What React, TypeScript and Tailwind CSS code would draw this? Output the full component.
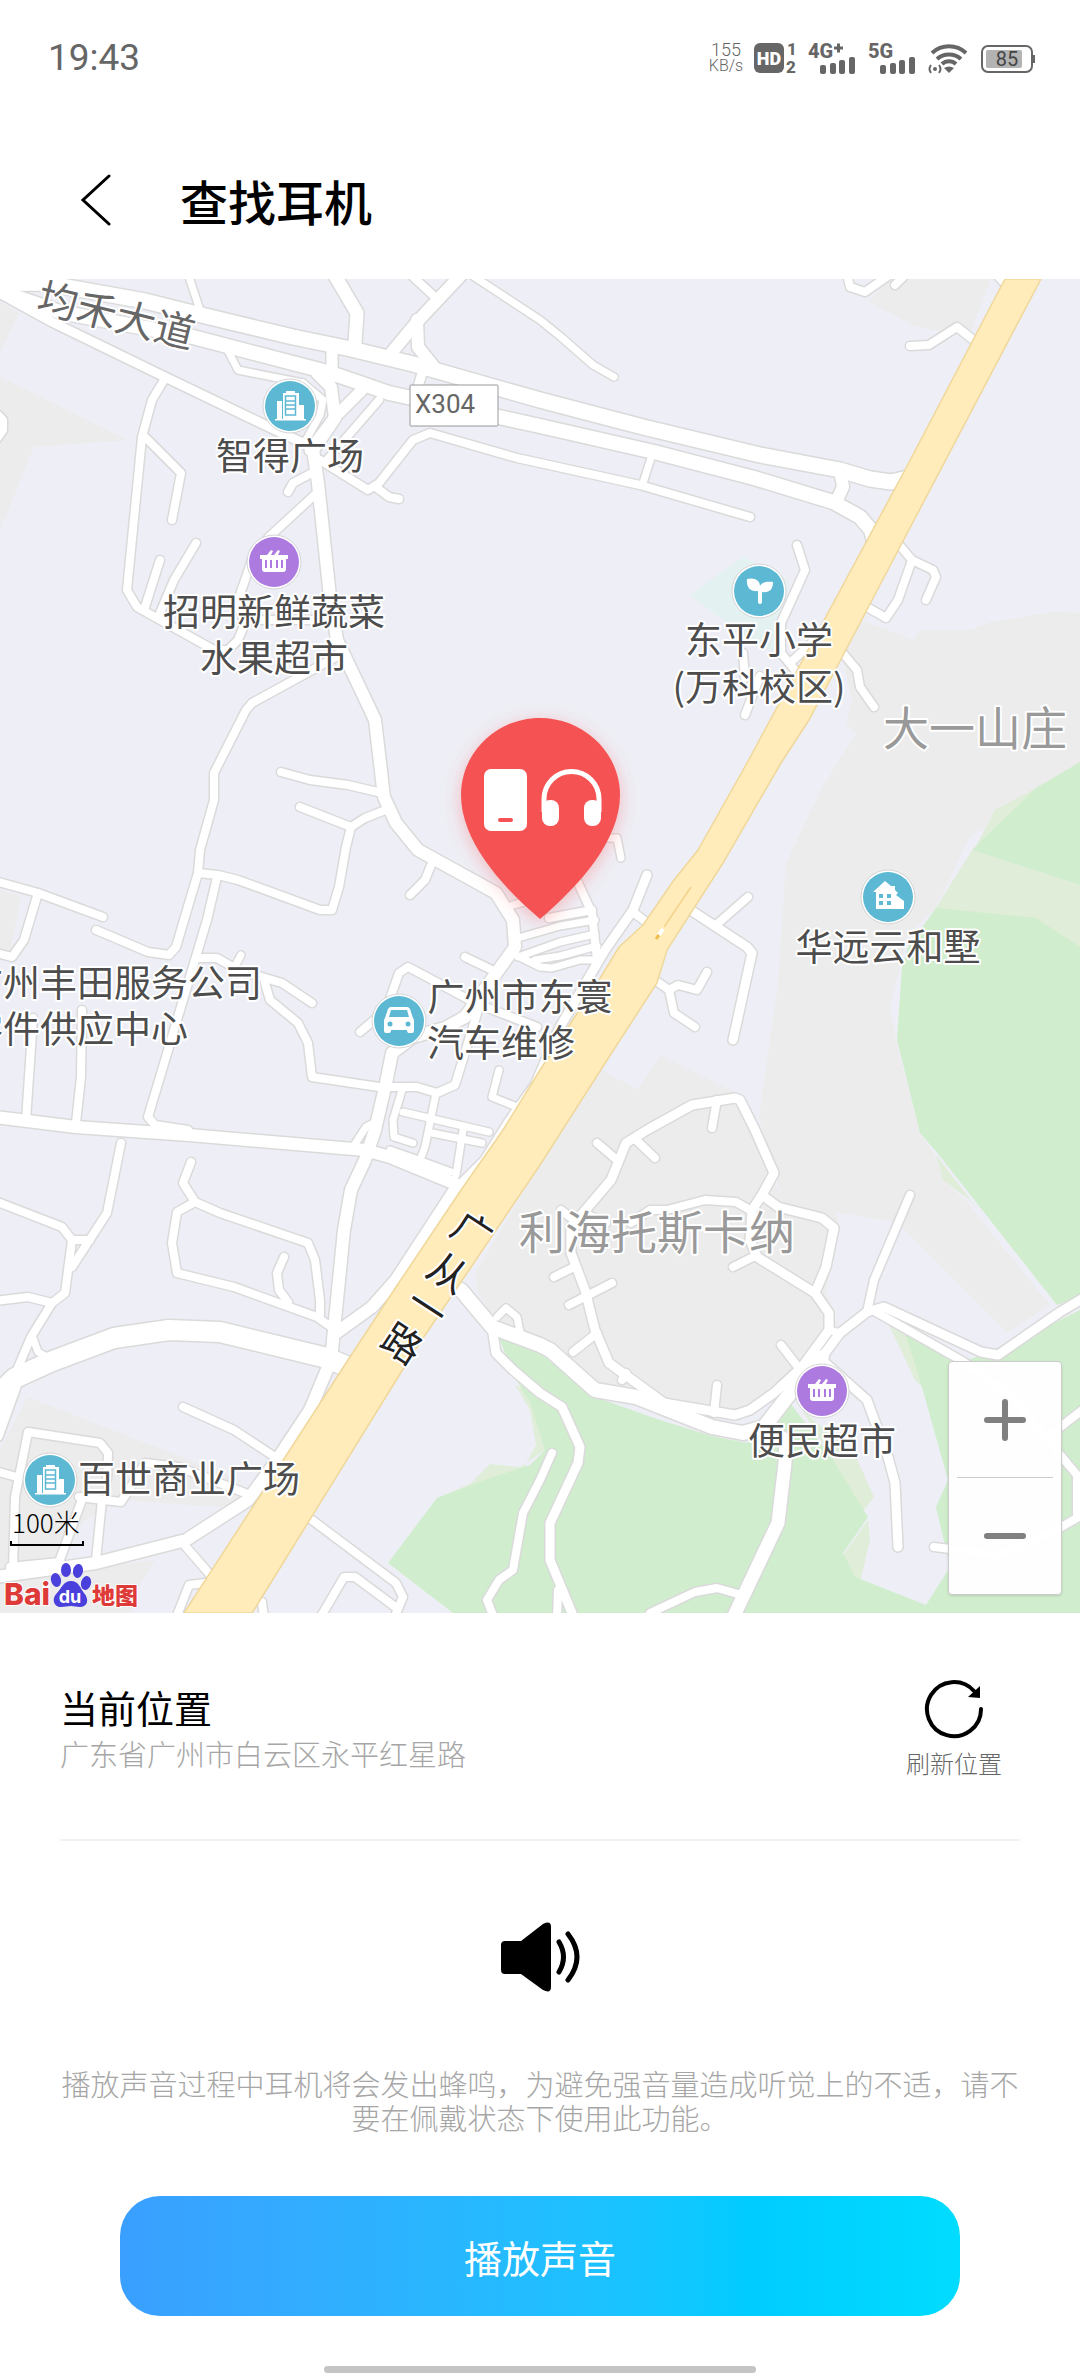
import React from "react";

type Road = { w: number; d: string };

const GREY_AREAS = [
  "0,377 127,440 34,447 0,530",
  "0,302 19,313 0,353",
  "0,890 21,897 10,953 0,950",
  "28,1397 241,1480 235,1508 120,1500 85,1520 55,1565 0,1570 0,1450",
  "0,1582 155,1560 140,1585 130,1613 0,1613",
  "869,302 888,279 991,279 970,333 929,330 912,325",
  "860,620 915,640 919,630 970,630 991,622 1053,612 1080,613 1080,780 988,827 970,836 936,908 908,935 890,1007 896,1040 920,1133 935,1155 943,1180 965,1200 1050,1305 1007,1333 898,1223 836,1212 781,1193 759,1117 778,983 786,863 822,787 857,733 846,723 852,700 842,655",
  "602,1070 638,1090 660,1055 736,1093 760,1130 777,1190 836,1212 840,1230 826,1290 838,1325 800,1370 740,1412 660,1400 600,1390 540,1345 500,1327 478,1293 475,1273 540,1165",
];

const PALE_GREEN_AREAS = [
  "972,850 1080,885 1080,950 1035,925 936,908",
  "995,810 1036,788 974,850",
  "936,1155 943,1180 970,1200 990,1225",
  "437,1498 470,1484 490,1464 520,1467 545,1450 545,1400 515,1385 530,1410 536,1445 520,1475",
  "802,1410 855,1455 874,1497 860,1515 830,1455",
  "888,1323 908,1333 925,1390 915,1380",
  "868,1520 832,1571 860,1582 870,1540",
];

const GREEN_AREAS = [
  "1080,762 1036,788 972,850 1080,885",
  "936,908 1036,918 1080,947 1080,1297 1057,1305 939,1155 920,1133 897,1040 902,967 908,947",
  "499,1337 540,1353 595,1397 660,1420 712,1436 747,1443 790,1403 830,1455 868,1517 843,1553 855,1577 926,1605 950,1567 936,1507 948,1480 918,1373 904,1330 964,1362 1050,1325 1080,1310 1080,1613 453,1613 388,1563 437,1498 490,1478 530,1465 545,1450 530,1402 513,1375",
];

const ROADS: Road[] = [
  // trunk roads
  { w: 15, d: "-10,284 45,283 145,301 193,313 293,337 351,349 413,364 540,400 643,427 760,455 840,470 870,479 891,482 908,478" },
  { w: 14, d: "-10,288 60,312 193,337 262,355 331,373 389,393 540,426 654,452 754,478 833,502 860,517 871,530 875,545" },
  { w: 9, d: "-10,288 52,322 165,377 269,427 305,444" },
  { w: 12, d: "317,373 331,387 335,418 313,450 318,483 330,597 337,640 368,705 375,720 384,797 396,823 418,850 496,893 513,920 515,947 482,993 465,1017 445,1028 413,1037 392,1053 386,1083 375,1130 365,1160 351,1190 344,1230 334,1330 331,1360 310,1410 275,1463 248,1500 186,1540 96,1563 -5,1577" },
  { w: 12, d: "-5,1117 76,1127 189,1135 365,1150 390,1157 458,1185" },
  { w: 20, d: "-5,1398 15,1378 50,1362 114,1338 169,1330 220,1332 327,1358 346,1366" },
  { w: 14, d: "-4,1435 14,1385" },
  { w: 12, d: "336,1333 372,1307 396,1280 458,1185" },
  { w: 14, d: "461,1290 492,1327 540,1345 550,1350 595,1390 636,1397 712,1427 743,1433 764,1427 795,1387 822,1357" },
  { w: 13, d: "764,1427 786,1440 785,1463 778,1523 733,1618" },
  // north side
  { w: 7, d: "188,274 200,310" },
  { w: 13, d: "334,274 357,313 355,343" },
  { w: 8, d: "410,274 436,298" },
  { w: 12, d: "462,274 417,322 392,352" },
  { w: 12, d: "417,320 418,347 434,367" },
  { w: 9, d: "423,370 417,390" },
  { w: 7, d: "470,274 540,320 561,337 593,365 614,377" },
  { w: 11, d: "332,348 332,377" },
  { w: 11, d: "362,390 335,417 310,450" },
  { w: 7, d: "303,383 323,400 320,415 305,442" },
  { w: 7, d: "226,347 238,370 303,383" },
  { w: 8, d: "379,400 327,460" },
  { w: 8, d: "320,460 368,490 379,483 413,440 430,433 517,458 540,463 640,485 750,517" },
  { w: 8, d: "377,488 389,497 399,499" },
  { w: 7, d: "652,455 643,483" },
  { w: 8, d: "164,380 152,400 142,437 127,590 137,607 214,650 228,650 238,640 245,623" },
  { w: 8, d: "320,490 269,537 252,560 237,603 245,623" },
  { w: 8, d: "145,437 181,473 172,520" },
  { w: 8, d: "196,543 174,580 160,613" },
  { w: 8, d: "160,560 145,607" },
  { w: 8, d: "312,473 293,483 288,492" },
  { w: 8, d: "245,620 330,620" },
  { w: 8, d: "-4,413 3,420 3,430 -4,440" },
  // west side
  { w: 8, d: "336,657 252,703 246,710 214,773 214,800 200,850 198,873 176,947 169,955 148,952 108,935 96,930" },
  { w: 8, d: "-5,881 38,893 103,917" },
  { w: 8, d: "38,893 24,940 12,957 -4,953" },
  { w: 8, d: "281,772 310,780 348,785 382,793" },
  { w: 8, d: "300,807 351,827 365,818 388,809" },
  { w: 8, d: "351,827 346,847 339,887 332,910 320,910 238,880 218,875 198,873" },
  { w: 8, d: "217,877 207,920 148,1117 155,1125 188,1130" },
  { w: 8, d: "196,958 217,958 238,970 282,983 312,1003" },
  { w: 7, d: "234,968 241,955" },
  { w: 8, d: "265,983 270,1000 298,1023 308,1043 312,1077 379,1087 417,1087 437,1093 455,1085 479,1007" },
  { w: 8, d: "432,863 425,880 410,895" },
  { w: 8, d: "465,957 496,972" },
  { w: 8, d: "360,1032 386,1010 399,973 408,967 427,977 475,1003 537,1027" },
  { w: 8, d: "33,1018 26,1120" },
  { w: 8, d: "82,1010 81,1077 76,1123" },
  { w: 8, d: "121,1143 107,1213 72,1267" },
  { w: 8, d: "-5,1201 62,1227 72,1240 65,1293 52,1303 31,1337 14,1377" },
  { w: 8, d: "72,1240 90,1240" },
  { w: 8, d: "-5,1301 28,1297 52,1303" },
  { w: 7, d: "33,1338 38,1352 52,1360" },
  { w: 8, d: "191,1162 183,1183 195,1202 220,1213 308,1243 315,1260 320,1300 320,1315" },
  { w: 8, d: "195,1202 177,1212 172,1243 177,1273 234,1287 317,1317 331,1327" },
  { w: 8, d: "284,1257 277,1273 279,1290 288,1302" },
  { w: 8, d: "183,1407 234,1430 275,1457" },
  { w: 8, d: "13,1570 15,1497 28,1432 100,1443 108,1453 107,1480" },
  { w: 8, d: "-5,1471 17,1477" },
  { w: 8, d: "79,1497 121,1502 132,1485 145,1463 179,1467 245,1493" },
  { w: 8, d: "83,1497 59,1562 10,1567" },
  { w: 8, d: "102,1500 96,1560" },
  { w: 8, d: "186,1547 200,1563 212,1577" },
  { w: 8, d: "205,1583 189,1585 176,1618" },
  { w: 8, d: "312,1520 396,1583 403,1597 394,1618" },
  { w: 8, d: "320,1618 344,1577 355,1577 398,1609" },
  { w: 8, d: "262,1602 264,1618" },
  // street grid next to the highway
  { w: 9, d: "647,875 633,910 605,950 560,1027 535,1085 510,1120 485,1160 458,1187" },
  { w: 7, d: "403,1087 393,1120 394,1137 413,1143" },
  { w: 7, d: "436,1093 425,1147 420,1160" },
  { w: 7, d: "403,1112 489,1132" },
  { w: 7, d: "432,1133 482,1143" },
  { w: 7, d: "463,1130 456,1175" },
  { w: 7, d: "499,1070 492,1097 517,1107" },
  { w: 7, d: "390,1150 413,1158 451,1172" },
  { w: 7, d: "353,1147 366,1127 374,1123" },
  { w: 8, d: "633,912 646,922" },
  { w: 7, d: "605,838 617,838 621,858" },
  { w: 8, d: "572,870 592,913 597,960" },
  { w: 8, d: "549,918 592,910" },
  { w: 7, d: "518,938 560,926 595,920" },
  { w: 7, d: "518,957 560,942 595,934" },
  { w: 7, d: "535,960 560,956 597,946" },
  { w: 7, d: "518,956 540,967 552,968 580,960 597,960" },
  { w: 7, d: "513,905 535,899" },
  // east side
  { w: 8, d: "910,346 929,345 957,327 976,342" },
  { w: 8, d: "847,274 850,287 865,292 888,276" },
  { w: 8, d: "895,285 904,276" },
  { w: 8, d: "996,274 1008,287" },
  { w: 12, d: "840,470 843,487 836,502" },
  { w: 8, d: "896,541 912,560 933,570 936,577 926,600" },
  { w: 8, d: "912,560 898,600 886,618 865,606" },
  { w: 8, d: "797,545 805,570 781,623 781,653 800,676" },
  { w: 8, d: "790,663 815,640" },
  { w: 8, d: "743,653 745,678" },
  { w: 8, d: "760,676 745,715" },
  { w: 8, d: "841,651 857,670 860,687 874,707" },
  { w: 9, d: "692,911 747,947 752,953 733,1040" },
  { w: 8, d: "716,925 748,897" },
  { w: 8, d: "655,980 669,990 678,985 697,990 707,972" },
  { w: 8, d: "669,990 674,1013 695,1027" },
  // residential loop
  { w: 9, d: "755,1130 774,1173 762,1195 752,1210 750,1240 757,1257 815,1293 829,1313 829,1330 802,1367 774,1393 750,1410 735,1415 664,1403 609,1363 595,1330 585,1290 571,1253 571,1227 611,1180 626,1143 647,1130 692,1105 735,1098 740,1100 755,1130" },
  { w: 9, d: "762,1195 778,1207 822,1218 834,1228 826,1267 815,1293" },
  { w: 8, d: "750,1210 736,1202 705,1200 667,1210 650,1210 631,1223" },
  { w: 8, d: "733,1267 757,1255" },
  { w: 8, d: "554,1277 576,1266" },
  { w: 8, d: "569,1305 612,1283" },
  { w: 8, d: "573,1352 597,1333" },
  { w: 8, d: "626,1373 622,1380" },
  { w: 8, d: "717,1385 714,1413" },
  { w: 8, d: "781,1345 798,1367" },
  { w: 8, d: "597,1143 617,1160" },
  { w: 8, d: "634,1138 655,1158" },
  { w: 8, d: "717,1100 712,1128" },
  { w: 8, d: "561,1210 578,1223" },
  { w: 8, d: "588,1215 606,1223" },
  { w: 7, d: "497,1317 506,1308 517,1317 520,1332" },
  { w: 9, d: "492,1327 496,1353 513,1370 540,1393 562,1407 580,1447 578,1463 550,1523 550,1560 574,1618" },
  { w: 8, d: "552,1453 540,1480 523,1513 513,1570 499,1580 487,1600 494,1618" },
  { w: 8, d: "650,1613 695,1592 717,1588 738,1594" },
  { w: 9, d: "822,1360 867,1400 888,1457 895,1483 898,1547" },
  { w: 8, d: "558,1590 557,1618" },
  { w: 8, d: "910,1195 874,1280 867,1312" },
  { w: 9, d: "1085,1297 1060,1312 998,1355 981,1352 884,1307 867,1312 840,1333 822,1357" },
  { w: 7, d: "840,1333 829,1330" },
  { w: 8, d: "876,1312 964,1362 1010,1395 1077,1475 1077,1518 1056,1530 1000,1555 934,1547" },
  { w: 8, d: "1050,1435 1085,1408" },
];

const HIGHWAY =
  "1005,279 905,470 774,713 747,763 698,850 674,880 643,925 619,947 599,980 540,1070 503,1130 461,1190 396,1287 348,1360 184,1613 252,1613 262,1597 413,1353 540,1165 609,1057 657,983 667,950 723,863 781,763 809,720 902,543 1041,279";

const PLACES = [
  { x: 290, y: 470, text: "智得广场" },
  { x: 274, y: 626, text: "招明新鲜蔬菜" },
  { x: 274, y: 672, text: "水果超市" },
  { x: 759, y: 654, text: "东平小学" },
  { x: 759, y: 701, text: "(万科校区)" },
  { x: 888, y: 961, text: "华远云和墅" },
  { x: 520, y: 1011, text: "广州市东寰" },
  { x: 501, y: 1057, text: "汽车维修" },
  { x: 114, y: 997, text: "广州丰田服务公司" },
  { x: 77, y: 1043, text: "零件供应中心" },
  { x: 822, y: 1455, text: "便民超市" },
  { x: 189, y: 1493, text: "百世商业广场" },
];

const ROAD_NAME = [
  { x: 472, y: 1232, char: "广" },
  { x: 448, y: 1273, char: "从" },
  { x: 427, y: 1308, char: "一" },
  { x: 402, y: 1344, char: "路" },
];

type PoiProps = { x: number; y: number; color: string; children: React.ReactNode };

const Poi = ({ x, y, color, children }: PoiProps) => (
  <g transform={`translate(${x} ${y})`}>
    <circle r="27" fill="#fff" stroke="#d5d5d8" strokeWidth="1" />
    <circle r="25" fill={color} />
    {children}
  </g>
);

const Building = () => (
  <>
    <path d="M-15 13h31v1.500h-31zM-13-5h5v18h-5zM-7-13h3v-2h9v2h4v12h5v14H-7z" fill="#fff" />
    <path d="M-4.500-10h10v19h-10zM-4.500-5h10M-4.500-1h10M-4.500 3h10" fill="none" stroke="#5cb8d3" strokeWidth="1.500" />
  </>
);

const Basket = () => (
  <>
    <path d="M-14-7h7l4-5 2 1-2 4h3l4-5 2 1-2 4h10v4h-2L12 7q0 3-3 3H-9q-3 0-3-3v-10h-2z" fill="#fff" />
    <path d="M-8-2V6M-3-2V6M3-2V6M8-2V6" stroke="#ad7ae0" strokeWidth="2" />
  </>
);

const MapView = () => (
  <svg viewBox="0 279 1080 1334" className="block h-auto w-full" role="img" aria-label="地图">
    <defs>
      <filter id="pinGlow" x="-30%" y="-30%" width="160%" height="160%">
        <feDropShadow dx="0" dy="4" stdDeviation="9" floodColor="#f55353" floodOpacity="0.35" />
      </filter>
    </defs>

    <rect x="0" y="279" width="1080" height="1334" fill="#eeeff6" />
    {GREY_AREAS.map((points) => (
      <polygon key={points} points={points} fill="#ececec" />
    ))}
    <polygon points="690,595 743,557 788,580 781,655 750,640" fill="#e3f1f1" />
    {PALE_GREEN_AREAS.map((points) => (
      <polygon key={points} points={points} fill="#e0edd9" />
    ))}
    {GREEN_AREAS.map((points) => (
      <polygon key={points} points={points} fill="#d0edcd" />
    ))}

    {/* casing first, then the white surface */}
    <g fill="none" stroke="#dadadb" strokeLinecap="round" strokeLinejoin="round">
      {ROADS.map((r) => (
        <polyline key={r.d} points={r.d} strokeWidth={r.w + 3} />
      ))}
    </g>
    <g fill="none" stroke="#fff" strokeLinecap="round" strokeLinejoin="round">
      {ROADS.map((r) => (
        <polyline key={r.d} points={r.d} strokeWidth={r.w} />
      ))}
    </g>
    <polygon points={HIGHWAY} fill="#ffecba" stroke="#f0d79a" strokeWidth="1.500" />
    <path d="M691 887 664 927" stroke="#f3d48a" strokeWidth="1.500" />
    <path d="M663 929 659 935" stroke="#fff" strokeWidth="4" />
    <path d="M659 935 656 939" stroke="#f0bd50" strokeWidth="3" />

    <rect x="410" y="385" width="88" height="41" rx="1" fill="#fff" stroke="#999" />
    <text x="415" y="413" fontSize="26" fill="#666" className="font-[Roboto,sans-serif]">
      X304
    </text>

    <g paintOrder="stroke" stroke="#fff" strokeWidth="4" strokeLinejoin="round">
      <g fill="#999" fontSize="46">
        <text x="883" y="745">大一山庄</text>
        <text x="519" y="1249">利海托斯卡纳</text>
      </g>
      <text x="116" y="330" fontSize="40" fill="#666" textAnchor="middle" transform="rotate(14 116 317)">
        均禾大道
      </text>
      <g fill="#222" fontSize="39" textAnchor="middle">
        {ROAD_NAME.map((c) => (
          <text key={c.char} x={c.x} y={c.y + 14} transform={`rotate(33 ${c.x} ${c.y})`}>
            {c.char}
          </text>
        ))}
      </g>
      <g fill="#4d4d4d" fontSize="37" textAnchor="middle">
        {PLACES.map((p) => (
          <text key={p.text} x={p.x} y={p.y}>
            {p.text}
          </text>
        ))}
      </g>
    </g>

    <Poi x={290} y={406} color="#5cb8d3">
      <Building />
    </Poi>
    <Poi x={50} y={1480} color="#5cb8d3">
      <Building />
    </Poi>
    <Poi x={274} y={562} color="#ad7ae0">
      <Basket />
    </Poi>
    <Poi x={822} y={1391} color="#ad7ae0">
      <Basket />
    </Poi>
    <Poi x={759} y={591} color="#5cb8d3">
      <path d="M-12-12C-4-14 1-10 1-5 3-9 8-10 14-9 14-1 10 2 3 1V11q0 2-2 2t-2-2V0C-8 1-13-3-12-12z" fill="#fff" />
    </Poi>
    <Poi x={888} y={897} color="#5cb8d3">
      <path d="M-15-5-3-16 3-11h4v4l3 3-2 2 8 6v8h-28V-5z" fill="#fff" />
      <path d="M-9-3h4v4h-4zM-1-3h4v4h-4zM-9 4h4v4h-4zM-1 4h4v4h-4z" fill="#5cb8d3" />
    </Poi>
    <Poi x={399} y={1021} color="#5cb8d3">
      <path d="M-8-14H8q2 0 3 2l3 9q1 1 1 3V10q0 2-2 2h-3q-2 0-2-3H-8q0 3-2 3h-3q-2 0-2-2V0q0-2 1-3l3-9q1-2 3-2z" fill="#fff" />
      <path d="M-8-11H8l2 7h-20z" fill="#5cb8d3" />
      <circle cx="-9" cy="3" r="2.500" fill="#5cb8d3" />
      <circle cx="9" cy="3" r="2.500" fill="#5cb8d3" />
    </Poi>

    {/* device pin */}
    <path
      d="M540 919C500 885 461 840 461 795 461 752 497 718 540 718S620 752 620 795C620 840 580 885 540 919z"
      fill="#f55353"
      filter="url(#pinGlow)"
    />
    <rect x="484" y="769" width="43" height="62" rx="7" fill="#fff" />
    <rect x="498" y="818" width="15" height="4" rx="2" fill="#f55353" />
    <path d="M544 812V799a27.500 27.500 0 0 1 55 0V812" fill="none" stroke="#fff" strokeWidth="5" />
    <rect x="542" y="800" width="17" height="26" rx="8" fill="#fff" />
    <rect x="584" y="800" width="17" height="26" rx="8" fill="#fff" />

    {/* scale bar */}
    <text x="12" y="1533" fontSize="26" fontWeight="300" fill="#000">
      100米
    </text>
    <path d="M11 1541V1545H83V1541" fill="none" stroke="#000" strokeWidth="2" />

    {/* map provider logo */}
    <g paintOrder="stroke" stroke="#fff" strokeWidth="2" fontWeight="800" fill="#dd3a38">
      <text x="4" y="1605" fontSize="30" className="font-[Inter,sans-serif]">
        Bai
      </text>
      <text x="92" y="1604" fontSize="23">
        地图
      </text>
    </g>
    <g fill="#4a40dc">
      <ellipse cx="56" cy="1580" rx="5" ry="7" transform="rotate(-15 56 1580)" />
      <ellipse cx="66" cy="1570" rx="5" ry="7" />
      <ellipse cx="78" cy="1571" rx="5" ry="7" transform="rotate(10 78 1571)" />
      <ellipse cx="86" cy="1583" rx="5" ry="7" transform="rotate(15 86 1583)" />
      <path d="M71 1581c8 0 9 7 13 12 6 7 3 14-4 14-4 0-6-1-9-1s-6 1-10 1c-7 0-10-8-4-14 5-5 6-12 14-12z" />
    </g>
    <text x="70" y="1603" fontSize="18" fontWeight="700" fill="#fff" textAnchor="middle" className="font-[Inter,sans-serif]">
      du
    </text>
  </svg>
);

const Signal = ({ label, plus }: { label: string; plus?: boolean }) => (
  <svg viewBox="0 0 48 32" className="h-8 w-12 overflow-visible" fill="#666">
    <text x="0" y="16" fontSize="20" fontWeight="800" className="font-[Roboto,sans-serif]">
      {label}
    </text>
    {plus && <path d="M26 6h9M30.500 1.500v9" stroke="#666" strokeWidth="3" />}
    <rect x="12" y="23" width="6" height="9" rx="2" />
    <rect x="22" y="21" width="6" height="11" rx="2" />
    <rect x="31" y="18" width="6" height="14" rx="2" />
    <rect x="41" y="15" width="6" height="17" rx="2" />
  </svg>
);

const StatusBar = () => (
  <div className="flex h-[116px] items-center justify-between pr-11 pl-12 font-[Roboto,sans-serif] text-[#666]">
    <span className="text-[37px]">19:43</span>
    <div className="flex items-center gap-3">
      <div className="flex w-8 flex-col items-center text-base leading-4 font-light">
        <span className="text-lg leading-4">155</span>
        <span>KB/s</span>
      </div>
      <svg viewBox="0 0 42 32" className="h-8 w-[42px] overflow-visible" fill="#666">
        <rect x="0" y="1" width="30" height="30" rx="6" />
        <text x="15" y="23" fontSize="18" fontWeight="900" fill="#fff" textAnchor="middle">
          HD
        </text>
        <text x="33" y="13" fontSize="17" fontWeight="800">
          1
        </text>
        <text x="32" y="31" fontSize="17" fontWeight="800">
          2
        </text>
      </svg>
      <Signal label="4G" plus />
      <Signal label="5G" />
      <svg viewBox="0 0 40 32" className="h-8 w-10 overflow-visible" fill="none" stroke="#666" strokeWidth="4">
        <path d="M4 11a25 25 0 0 1 34 0M9 17a18 18 0 0 1 24 0M14 22a10 10 0 0 1 14 0" />
        <path d="M21 31l-5-5q5-3 10 0z" fill="#666" stroke="none" />
        <circle cx="7" cy="27" r="2" fill="#666" stroke="none" />
        <path d="M3 23q-3 4 0 8M11 23q3 4 0 8" strokeWidth="2" />
      </svg>
      <svg viewBox="0 0 56 32" className="h-8 w-14 overflow-visible" fill="none">
        <rect x="2" y="4" width="50" height="26" rx="6" stroke="#666" strokeWidth="2" />
        <rect x="6" y="8" width="36" height="18" rx="2" fill="#b3b3b3" />
        <path d="M54 13v8" stroke="#666" strokeWidth="2" />
        <text x="27" y="24" fontSize="20" fill="#444" textAnchor="middle">
          85
        </text>
      </svg>
    </div>
  </div>
);

export default function App() {
  return (
    <main className="flex w-full flex-col bg-white font-['Noto_Sans_CJK_SC',sans-serif] text-black">
      <StatusBar />

      <header className="flex h-[163px] items-center gap-[68px] pt-1 pl-20">
        <button type="button" aria-label="返回">
          <svg viewBox="0 0 32 52" className="h-[52px] w-8" fill="none" stroke="#000" strokeWidth="3" strokeLinecap="round">
            <path d="M29 2 3 26 29 50" />
          </svg>
        </button>
        <h1 className="text-5xl leading-none font-medium">查找耳机</h1>
      </header>

      <section className="relative">
        <MapView />
        <div className="absolute right-[18px] bottom-[18px] flex w-[114px] flex-col rounded-sm border border-[#ccc] bg-white/95 px-2 shadow-sm">
          <button type="button" aria-label="放大" className="flex h-[116px] items-center justify-center border-b border-[#ccc]">
            <svg viewBox="0 0 42 42" className="size-[42px]" stroke="#808080" strokeWidth="6" strokeLinecap="round">
              <path d="M3 21h36M21 3v36" />
            </svg>
          </button>
          <button type="button" aria-label="缩小" className="flex h-[116px] items-center justify-center">
            <svg viewBox="0 0 42 42" className="size-[42px]" stroke="#808080" strokeWidth="6" strokeLinecap="round">
              <path d="M3 21h36" />
            </svg>
          </button>
        </div>
      </section>

      <section className="mx-[60px] flex items-center justify-between border-b-2 border-[#f2f2f2] pt-[66px] pr-[18px] pb-[60px]">
        <div className="pb-2">
          <h2 className="text-[38px] leading-[56px]">当前位置</h2>
          <p className="text-[29px] leading-9 font-light text-[#a6a6a6]">广东省广州市白云区永平红星路</p>
        </div>
        <button type="button" className="flex flex-col items-center gap-2 text-2xl font-light text-[#666]">
          <svg viewBox="0 0 60 60" className="size-[60px]" fill="none" stroke="#000" strokeWidth="4">
            <path d="M57 30A27 27 0 1 1 50 12" strokeLinecap="round" />
            <path d="M56 7V19L44 18z" fill="#000" stroke="none" />
          </svg>
          刷新位置
        </button>
      </section>

      <section className="flex flex-col items-center px-[60px] pt-20">
        <svg viewBox="0 0 80 72" className="h-[72px] w-20">
          <path d="M5 20H21L43 3Q51-1 51 6V66Q51 73 43 69L21 53H5Q1 53 1 49V24Q1 20 5 20z" fill="#000" />
          <path d="M59 21Q68 36 59 51M68 13Q86 36 68 59" fill="none" stroke="#000" strokeWidth="5" strokeLinecap="round" />
        </svg>
        <p className="mt-[73px] text-center text-[29px] leading-[34px] font-light text-[#a6a6a6]">
          播放声音过程中耳机将会发出蜂鸣，为避免强音量造成听觉上的不适，请不要在佩戴状态下使用此功能。
        </p>
        <div className="mt-[62px] w-full px-[60px]">
          <button
            type="button"
            className="h-[120px] w-full rounded-[40px] bg-gradient-to-r from-[#3a9fff] via-[#00ccff] via-75% to-[#00dcff] text-[38px] text-white"
          >
            播放声音
          </button>
        </div>
      </section>

      <div className="mx-auto mt-[50px] h-[7px] w-2/5 rounded-full bg-[#c4c4c4]" />
    </main>
  );
}
